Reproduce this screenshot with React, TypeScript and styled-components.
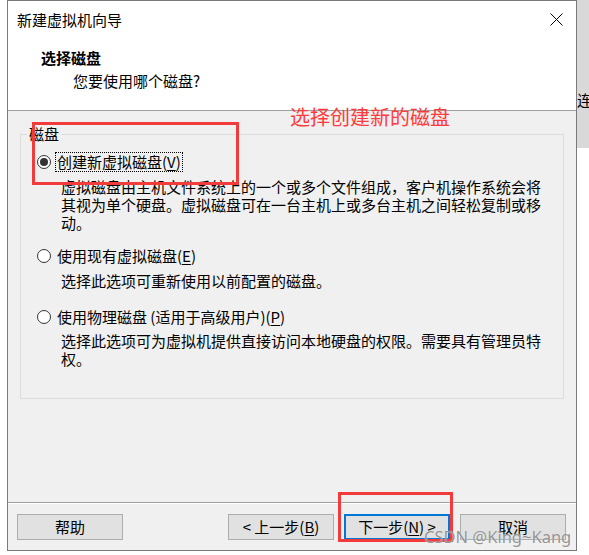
import styled, { createGlobalStyle } from "styled-components";

const GlobalStyle = createGlobalStyle`
    html, body {
        margin: 0;
        padding: 0;
        background: #ffffff;
    }
    body {
        font-family: 'Noto Sans CJK SC', 'Noto Sans', sans-serif;
        font-size: 15px;
        color: #000000;
    }
`

const Page = styled.div`
    position: relative;
    width: 589px;
    height: 555px;
    overflow: hidden;
    display: flex;
    align-items: flex-start;
    padding-left: 7px;
    box-sizing: border-box;
`

const Dialog = styled.div`
    width: 570px;
    height: 551px;
    border: 1px solid #7a7a7a;
    box-sizing: border-box;
    display: flex;
    flex-direction: column;
    background: #f0f0f0;
`

const SideStrip = styled.div`
    width: 12px;
    height: 148px;
    background: #d9d9d9;
    overflow: hidden;
    padding-top: 90px;
    box-sizing: border-box;
    line-height: 20px;
    white-space: nowrap;
`

const Header = styled.div`
    height: 110px;
    background: #ffffff;
    border-bottom: 1px solid #a0a0a0;
    box-sizing: border-box;
    display: flex;
    flex-direction: column;
`

const TitleBar = styled.div`
    height: 37px;
    display: flex;
    align-items: center;
    justify-content: space-between;
    padding: 0 13px 0 9px;
    line-height: 20px;
`

const Heading = styled.div`
    margin-top: 10px;
    padding-left: 33px;
    font-weight: 700;
    line-height: 20px;
`

const SubHeading = styled.div`
    margin-top: 3px;
    padding-left: 65px;
    line-height: 20px;
`

const Body = styled.div`
    height: 391px;
    display: flex;
    flex-direction: column;
`

const Group = styled.fieldset`
    margin: 14px 12px 0 12px;
    padding: 0 0 30px 0;
    border: 1px solid #dcdcdc;
    min-width: 0;
`

const Legend = styled.legend`
    margin-left: 6px;
    padding: 0 2px;
    line-height: 18px;
`

const OptionRow = styled.div<{ $top: number }>`
    display: flex;
    align-items: center;
    height: 20px;
    margin-top: ${p => p.$top}px;
    padding-left: 16px;
    white-space: nowrap;
`

const Radio = styled.span<{ $checked?: boolean }>`
    width: 14px;
    height: 14px;
    border-radius: 50%;
    border: 1px solid #333333;
    background: #ffffff;
    box-sizing: border-box;
    display: grid;
    place-items: center;
    margin-right: 4px;
    &::after {
        content: '';
        width: 8px;
        height: 8px;
        border-radius: 50%;
        background: ${p => (p.$checked ? '#333333' : 'transparent')};
    }
`

const OptionLabel = styled.span<{ $focused?: boolean }>`
    line-height: 18px;
    padding: 0 1px;
    border: 1px dotted ${p => (p.$focused ? '#000000' : 'transparent')};
`

const Key = styled.span`
    text-decoration: underline;
    text-underline-offset: 2px;
`

const Desc = styled.div<{ $gap: number }>`
    margin-top: ${p => p.$gap}px;
    padding-left: 40px;
    line-height: 18px;
    white-space: nowrap;
`

const Footer = styled.div`
    height: 48px;
    border-top: 1px solid #a0a0a0;
    box-shadow: inset 0 1px 0 #ffffff;
    box-sizing: border-box;
    display: flex;
    align-items: flex-start;
    gap: 10px;
    padding: 11px 10px 0 9px;
`

const Spacer = styled.div`
    flex: 1;
`

const Button = styled.div<{ $focused?: boolean }>`
    width: 106px;
    height: 26px;
    box-sizing: border-box;
    background: #e1e1e1;
    border: ${p => (p.$focused ? '2px solid #0078d7' : '1px solid #adadad')};
    display: flex;
    align-items: center;
    justify-content: center;
    line-height: 18px;
    white-space: nowrap;
`

const ButtonLabel = styled.span`
    display: inline-block;
`

const RedBox = styled.div<{ $x: number; $y: number; $w: number; $h: number }>`
    position: absolute;
    left: ${p => p.$x}px;
    top: ${p => p.$y}px;
    width: ${p => p.$w}px;
    height: ${p => p.$h}px;
    border: 3px solid #f23c3c;
    box-sizing: border-box;
    pointer-events: none;
`

const Annotation = styled.div`
    position: absolute;
    left: 290px;
    top: 103px;
    font-size: 20px;
    line-height: 28px;
    color: #ff3a3a;
    white-space: nowrap;
`

const Watermark = styled.div`
    position: absolute;
    left: 424px;
    top: 526px;
    font-family: 'Noto Sans', 'Liberation Sans', sans-serif;
    font-size: 16.5px;
    line-height: 22px;
    color: rgba(120, 120, 120, 0.8);
    text-shadow: 0 0 1px rgba(255, 255, 255, 0.9);
    white-space: nowrap;
`

const CloseIcon = () => (
    <svg width="13" height="13" viewBox="0 0 13 13">
        <path d="M0.5 0.5 L12.5 12.5 M12.5 0.5 L0.5 12.5" stroke="#000" strokeWidth="1" fill="none" />
    </svg>
)

const App = () => {
    return (
        <>
            <GlobalStyle />
            <Page>
                <Dialog>
                    <Header>
                        <TitleBar>
                            <span>新建虚拟机向导</span>
                            <CloseIcon />
                        </TitleBar>
                        <Heading>选择磁盘</Heading>
                        <SubHeading>您要使用哪个磁盘?</SubHeading>
                    </Header>
                    <Body>
                        <Group>
                            <Legend>磁盘</Legend>
                            <OptionRow $top={9}>
                                <Radio $checked />
                                <OptionLabel $focused>创建新虚拟磁盘(<Key>V</Key>)</OptionLabel>
                            </OptionRow>
                            <Desc $gap={6}>
                                虚拟磁盘由主机文件系统上的一个或多个文件组成，客户机操作系统会将<br />
                                其视为单个硬盘。虚拟磁盘可在一台主机上或多台主机之间轻松复制或移<br />
                                动。
                            </Desc>
                            <OptionRow $top={14}>
                                <Radio />
                                <OptionLabel>使用现有虚拟磁盘(<Key>E</Key>)</OptionLabel>
                            </OptionRow>
                            <Desc $gap={6}>选择此选项可重新使用以前配置的磁盘。</Desc>
                            <OptionRow $top={17}>
                                <Radio />
                                <OptionLabel>使用物理磁盘 (适用于高级用户)(<Key>P</Key>)</OptionLabel>
                            </OptionRow>
                            <Desc $gap={5}>
                                选择此选项可为虚拟机提供直接访问本地硬盘的权限。需要具有管理员特<br />
                                权。
                            </Desc>
                        </Group>
                    </Body>
                    <Footer>
                        <Button><ButtonLabel>帮助</ButtonLabel></Button>
                        <Spacer />
                        <Button><ButtonLabel>&lt; 上一步(<Key>B</Key>)</ButtonLabel></Button>
                        <Button $focused><ButtonLabel>下一步(<Key>N</Key>) &gt;</ButtonLabel></Button>
                        <Button><ButtonLabel>取消</ButtonLabel></Button>
                    </Footer>
                </Dialog>
                <SideStrip>连</SideStrip>
                <Annotation>选择创建新的磁盘</Annotation>
                <RedBox $x={32} $y={122} $w={207} $h={63} />
                <RedBox $x={338} $y={492} $w={115} $h={50} />
                <Watermark>CSDN @King~Kang</Watermark>
            </Page>
        </>
    );
}

export default App;
